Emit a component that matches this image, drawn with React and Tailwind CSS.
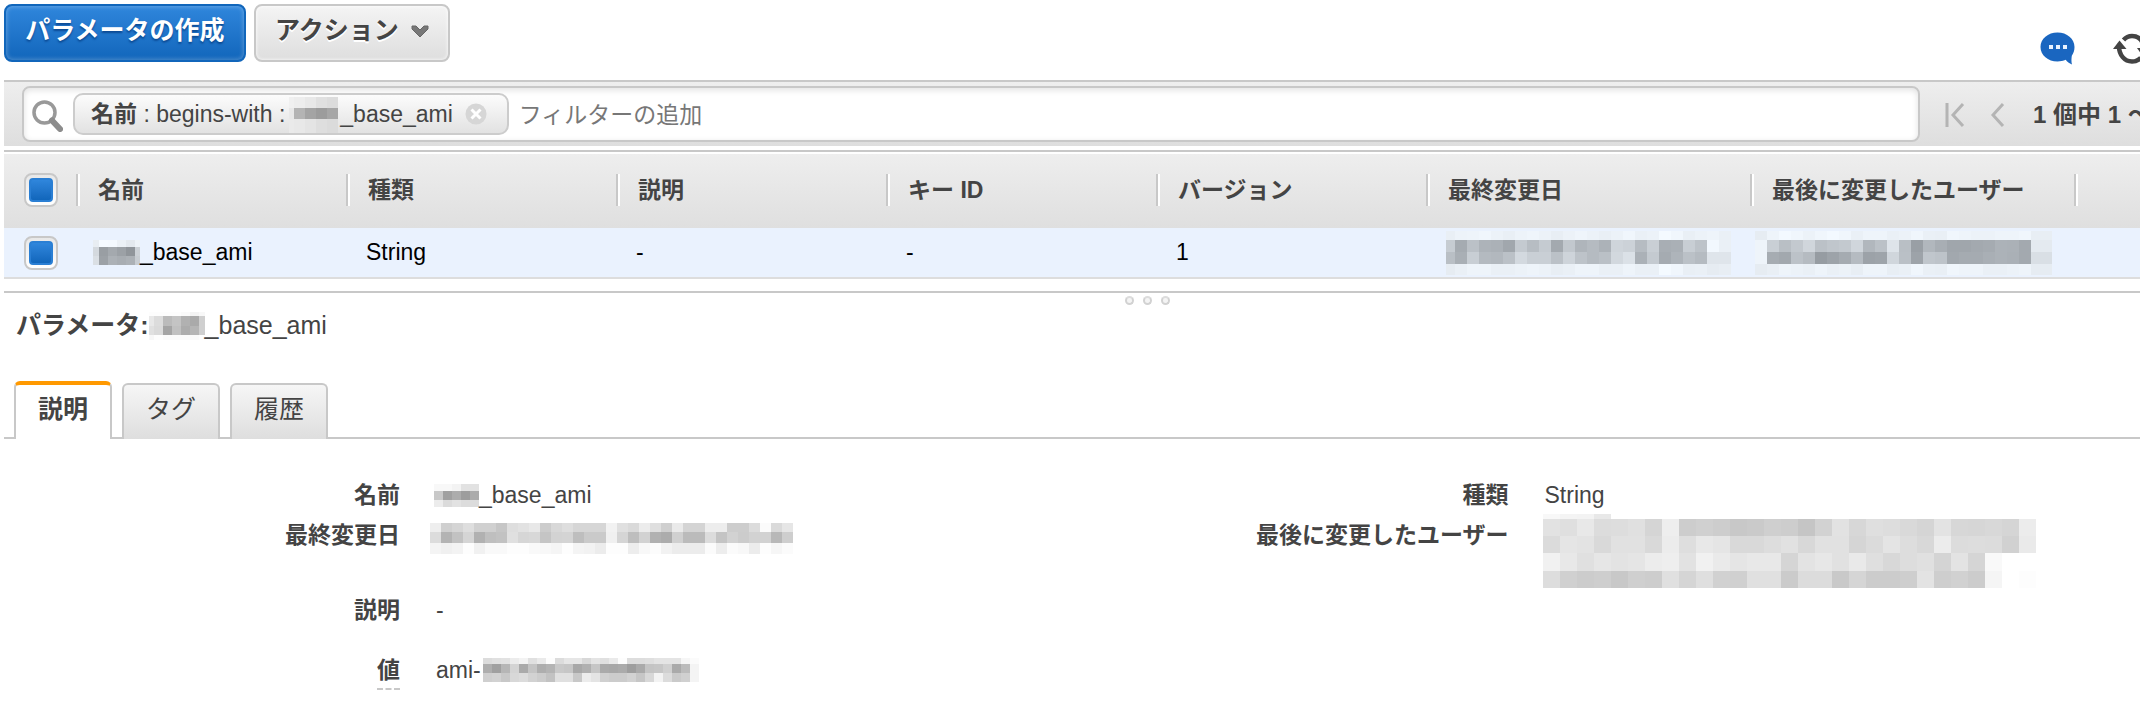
import React from "react";

// Pixelated block that hides private values. Each row is "height: gray gray ...", two hex digits per cell.
function Mosaic({ w, first = w, last = w, rows, tint = 0, className = "" }) {
  const parsed = rows.map(([h, cells]) => ({ h, cells: cells.split(" ") }));
  const count = parsed[0].cells.length;
  const width = first + last + (count - 2) * w;
  const height = parsed.reduce((sum, row) => sum + row.h, 0);
  let y = 0;
  return (
    <svg
      width={width}
      height={height}
      viewBox={`0 0 ${width} ${height}`}
      shapeRendering="crispEdges"
      aria-hidden="true"
      className={`block shrink-0 ${className}`}
    >
      {parsed.map(({ h, cells }, r) => {
        const top = y;
        y += h;
        return cells.map((cell, i) => {
          if (cell === "--") return null;
          const v = parseInt(cell, 16);
          const x = i === 0 ? 0 : first + (i - 1) * w;
          const cw = i === 0 ? first : i === count - 1 ? last : w;
          const g = Math.min(255, v + tint);
          const b = Math.min(255, v + tint * 2);
          return <rect key={`${r}-${i}`} x={x} y={top} width={cw} height={h} fill={`rgb(${v},${g},${b})`} />;
        });
      })}
    </svg>
  );
}

const rowName = [
  [7, "e8 f5 f4 ec e4 ee"],
  [9, "d4 99 a4 9c 90 cc"],
  [9, "da 9c ac a8 ac c8"],
];
const rowDate = [
  [9, "e9 ed ee f0 ec e9 ed ef ec e8 ec ef ec e9 ec f0 ea ec f4 f0 e9 ec ee ea"],
  [12, "c6 a5 bb ad ab a1 c4 b7 c5 a3 c2 af b5 ac cf cc b6 c9 a8 aa c8 bd f2 ea"],
  [12, "b9 a9 c8 b4 b2 bb d3 c9 c9 bb ce bd b5 ba d2 db ab c4 a5 ae bb b5 df df"],
  [11, "e6 ea ee ee ea ea ec ee ec e8 ea ee ee ea ea ee ea ea f4 f0 e9 ea e6 e8"],
];
const rowUser = [
  [9, "e6 ee f3 f0 ec f0 f3 f0 ea ee ee ea ec f0 ea e9 f0 ee ec ec ee ee f0 e8"],
  [12, "ee c9 b9 c3 d0 bb c0 c3 d0 b1 bb de b9 99 b1 a8 a0 a0 a3 a5 ac ab a3 e4"],
  [12, "ee a6 a2 bc b5 96 9d a5 b5 9c 9e d0 ba 9d c0 bd a2 a5 a5 a9 ac aa a3 d9"],
  [11, "e6 e9 ee ec ea ee ea ec e8 ee ee e8 ea f0 ea e9 f0 ee ee ea ea ec ee e6"],
];
const titleName = [
  [4, "fd fd fd fd fa f3 f8"],
  [10, "e8 dc bb c4 b1 aa cf"],
  [9, "e0 da a4 c0 ac b5 cf"],
  [5, "f7 fd fa fa fa fa fd"],
];
const chipName = [
  [11, "f0 ed e8 e0 dc"],
  [11, "e8 b4 a4 9c a6"],
  [14, "ea e8 e4 de db"],
];
const detailName = [
  [7, "f8 f8 f3 e2 e2"],
  [9, "c8 a0 ac 9d ab"],
  [7, "ec db e2 dc dc"],
];
const detailDate = [
  [9, "ee cf d5 de d0 d0 c6 de e2 e8 cc d8 de d6 d6 d6 f2 e0 da ec df cf ea d4 d4 ed ed cd cd dc fb da e6"],
  [11, "dc b3 c2 d5 b1 bf c2 e0 d6 d8 c5 d3 d4 be ca ca f0 d5 be d2 b1 ac d0 bb bb dc c4 d2 cc d2 d2 b8 ce"],
  [11, "f4 f0 f3 fd f1 f9 f9 fd fd f9 f8 f5 fd f4 f2 ec fd fd ed f8 fc f2 ec ec ec fb ed fb f8 ec fd f6 fb"],
];
const detailValue = [
  [6, "dc e0 e2 ec f3 e0 ea fd dc e6 e6 d8 e4 e0 ea fd dd dd df e4 e4 e4 f6 fb"],
  [9, "ae a0 b6 d4 aa c4 ae b4 c9 c6 a8 b0 c6 aa a8 ab 9e aa c4 c6 d0 aa bc f4"],
  [9, "cf d2 c8 d8 dc d2 cc c2 e0 e0 c8 ec e4 d0 cc cc d2 c6 d8 f3 dc ca d0 f4"],
];
const detailUser = [
  [5, "f8 f4 f3 e8 -- -- -- -- -- -- -- -- -- -- -- -- -- -- -- -- -- -- -- -- -- -- -- -- --"],
  [17, "e2 df e8 dc dd e0 d5 ee cd d0 cd c8 ca cf cd c5 d2 e2 d7 df dd d9 d5 e3 d7 d6 d8 d5 ec"],
  [17, "db e5 e3 d9 e1 e1 d9 ec de e8 e5 d9 d9 dd e1 d8 e1 e1 d5 db e4 dd d8 ec dc dd dc d1 ea"],
  [18, "f1 e8 e0 e6 e3 e5 ec ee e2 f1 ea e5 e8 e8 d5 e3 e7 e1 e9 df d8 dd e0 d4 e3 d5 f9 -- --"],
  [17, "dd d0 cc ce c8 cf cd e0 d5 df d1 d0 e0 e0 cb dc dc c9 d5 cc cc ce e3 ce d1 cc f5 -- fd"],
];

const columns = [
  { label: "名前", width: "w-[270px]" },
  { label: "種類", width: "w-[270px]" },
  { label: "説明", width: "w-[270px]" },
  { label: "キー ID", width: "w-[270px]" },
  { label: "バージョン", width: "w-[270px]" },
  { label: "最終変更日", width: "w-[324px]" },
  { label: "最後に変更したユーザー", width: "w-[324px]" },
  { label: "", width: "w-auto" },
];

function Check({ label }) {
  return (
    <input
      type="checkbox"
      defaultChecked
      aria-label={label}
      className="ml-5 grid size-[34px] appearance-none place-items-center rounded-lg border-2 border-[#c8c8c8] bg-linear-to-b from-[#e8e8e8] to-white checked:before:size-6 checked:before:rounded checked:before:border-2 checked:before:border-[#2a7fd4] checked:before:bg-linear-to-b checked:before:from-[#2f86dc] checked:before:to-[#1166bb] checked:before:content-['']"
    />
  );
}

function Toolbar() {
  return (
    <header className="flex h-20 items-start justify-between pt-1">
      <div className="flex gap-2">
        <button className="h-[58px] w-[242px] rounded-lg border-2 border-[#1166bb] bg-linear-to-b from-[#2f86dc] to-[#1166bb] pb-1 text-[25px] font-bold text-white shadow-[inset_0_0_4px_1px_rgba(255,255,255,0.25)] [text-shadow:0_2px_2px_#0b4a94]">
          パラメータの作成
        </button>
        <button className="flex h-[58px] w-[196px] items-center justify-center gap-3 rounded-lg border-2 border-[#c8c8c8] bg-linear-to-b from-[#f4f4f4] to-[#dedede] pb-1 text-[25px] font-bold shadow-[inset_0_0_3px_1px_rgba(255,255,255,0.6)] [text-shadow:0_2px_0_#fff]">
          アクション
          <svg width="18" height="12" viewBox="0 0 18 12" aria-hidden="true">
            <path d="M1 1h4l4 4 4-4h4v3l-8 8-8-8z" fill="#777" stroke="#666" strokeWidth="1" />
          </svg>
        </button>
      </div>
      <div className="flex w-[100px] shrink-0 items-center gap-[38px] overflow-hidden pt-7">
        <button aria-label="フィードバック" className="shrink-0">
          <svg width="35" height="33" viewBox="0 0 35 33">
            <path
              d="M17.500 0.500C8 0.500 0.500 6.800 0.500 15c0 8.200 7.500 14.500 17 14.500 3 0 5.800-.6 8.200-1.700 1.500 2 3.500 3.800 6.300 4.700-.8-2.600-.6-6-.2-8.700 1.700-2.500 2.700-5.500 2.700-8.800C34.500 6.800 27 0.500 17.500 0.500z"
              fill="#1a66c0"
            />
            <path d="M9 13h4v4H9zM16 13h4v4h-4zM23 13h4v4h-4z" fill="#e8f2ff" />
          </svg>
        </button>
        <button aria-label="更新" className="shrink-0">
          <svg width="36" height="32" viewBox="0 0 36 32" fill="none">
            <path d="M6 13c0 9 5.500 15.500 13 15.500 3.600 0 6.600-1.400 8.800-3.800" stroke="#444" strokeWidth="4.500" />
            <path d="M0 16 6.500 7.500 13.500 16z" fill="#444" />
            <path d="M10.500 7C12.600 4.600 15.500 3 19 3c7.500 0 12 5.800 12 14" stroke="#444" strokeWidth="4.500" />
            <path d="M24 15h12l-6 8.500z" fill="#444" />
          </svg>
        </button>
      </div>
    </header>
  );
}

function FilterBar() {
  return (
    <div className="flex h-[66px] items-center overflow-hidden border-t-2 border-[#c8c8c8] bg-linear-to-b from-[#eee] to-[#dedede] pl-[18px]">
      <div className="flex h-14 min-w-0 flex-1 items-center rounded-lg border-2 border-[#c8c8c8] bg-white pl-2 shadow-[inset_0_2px_6px_rgba(0,0,0,0.12)]">
        <svg width="31" height="32" viewBox="0 0 31 32" fill="none" aria-hidden="true" className="mr-2.5 mt-1 shrink-0">
          <circle cx="12.500" cy="12.500" r="10.500" stroke="#999" strokeWidth="3.500" />
          <path d="M20 20.500l8 8.500" stroke="#8c8c8c" strokeWidth="6" strokeLinecap="round" />
        </svg>
        <div className="flex h-[42px] shrink-0 items-end rounded-[10px] border-2 border-[#ccc] bg-linear-to-b from-[#fcfcfc] to-[#e2e2e2] pl-4 pr-5">
          <span className="self-center pr-1 whitespace-pre">
            <b>名前</b> : begins-with :
          </span>
          <Mosaic w={11} first={5} rows={chipName} />
          <span className="self-center pl-0.5">_base_ami</span>
          <button aria-label="フィルターを削除" className="ml-3 self-center">
            <svg width="22" height="22" viewBox="0 0 22 22">
              <circle cx="11" cy="11" r="10.500" fill="#d6d6d6" />
              <path d="M6.500 6.500l9 9M15.500 6.500l-9 9" stroke="#fff" strokeWidth="3" />
            </svg>
          </button>
        </div>
        <input
          type="text"
          aria-label="フィルター"
          placeholder="フィルターの追加"
          className="h-full min-w-0 flex-1 bg-transparent px-2.5 pt-0.5 outline-none placeholder:text-[#777]"
        />
      </div>
      <nav className="flex w-[220px] shrink-0 items-center overflow-hidden pl-[25px] pt-0.5">
        <button aria-label="最初のページ" className="shrink-0">
          <svg width="20" height="24" viewBox="0 0 20 24" fill="none" stroke="#b4b4b4" strokeWidth="3">
            <path d="M2 0v24M18 1 8 12l10 11" />
          </svg>
        </button>
        <button aria-label="前のページ" className="ml-6 shrink-0">
          <svg width="16" height="24" viewBox="0 0 16 24" fill="none" stroke="#b4b4b4" strokeWidth="3">
            <path d="M14 1 4 12l10 11" />
          </svg>
        </button>
        <span className="ml-7 text-2xl font-bold whitespace-nowrap">1 個中 1 〜</span>
      </nav>
    </div>
  );
}

function ParameterTable() {
  return (
    <div className="mt-1 border-t-2 border-[#c8c8c8] pt-0.5">
      <table className="w-full table-fixed border-collapse text-left">
        <thead>
          <tr className="h-[74px] bg-linear-to-b from-[#eee] to-[#dfdfdf]">
            <th className="w-[72px] p-0 pb-0.5">
              <Check label="すべて選択" />
            </th>
            {columns.map((c, i) => (
              <th key={i} className={`p-0 pb-0.5 ${c.width}`}>
                <div className="h-8 border-l-2 border-[#c8c8c8] pl-5 leading-8 whitespace-nowrap shadow-[inset_2px_0_0_#fff]">
                  {c.label}
                </div>
              </th>
            ))}
          </tr>
        </thead>
        <tbody>
          <tr className="h-[50px] border-b-2 border-[#ddd] bg-[#eaf2fe] text-black">
            <td className="p-0">
              <Check label="行を選択" />
            </td>
            <td className="p-0 pl-[17px]">
              <div className="flex items-center">
                <Mosaic w={9} first={6} last={5} tint={5} rows={rowName} />
                _base_ami
              </div>
            </td>
            <td className="p-0 pl-5">String</td>
            <td className="p-0 pl-5">-</td>
            <td className="p-0 pl-5">-</td>
            <td className="p-0 pl-5">1</td>
            <td className="p-0 pl-5">
              <Mosaic w={12} first={9} tint={6} rows={rowDate} />
            </td>
            <td className="p-0 pl-[5px]">
              <Mosaic w={12} last={21} tint={6} rows={rowUser} />
            </td>
            <td className="p-0"></td>
          </tr>
        </tbody>
      </table>
    </div>
  );
}

function Tabs() {
  return (
    <div role="tablist" className="mt-[38px] flex h-[58px] items-end gap-2.5 border-b-2 border-[#c8c8c8] pl-2.5">
      <button
        role="tab"
        aria-selected="true"
        className="-mb-0.5 h-[58px] w-[98px] rounded-t-md border-x-2 border-t-4 border-x-[#c8c8c8] border-t-[#ff9900] bg-white pb-1 text-[25px] font-bold"
      >
        説明
      </button>
      {["タグ", "履歴"].map((t) => (
        <button
          key={t}
          role="tab"
          aria-selected="false"
          className="-mb-0.5 h-14 w-[98px] rounded-t-md border-x-2 border-t-2 border-[#c8c8c8] bg-linear-to-b from-[#f6f6f6] to-[#dedede] pb-1 text-[25px]"
        >
          {t}
        </button>
      ))}
    </div>
  );
}

function Details() {
  return (
    <dl className="mt-9 grid grid-cols-[396px_minmax(0,20fr)_336px_minmax(0,17fr)] gap-x-9 leading-10 [&>dt]:text-right [&>dt]:font-bold [&>dt]:whitespace-nowrap">
      <dt>名前</dt>
      <dd className="-ml-0.5 flex items-center">
        <Mosaic w={9} rows={detailName} />
        _base_ami
      </dd>
      <dt>種類</dt>
      <dd>String</dd>

      <dt>最終変更日</dt>
      <dd className="-ml-1.5 pt-2">
        <Mosaic w={11} rows={detailDate} />
      </dd>
      <dt>最後に変更したユーザー</dt>
      <dd className="-ml-0.5 -mt-px">
        <Mosaic w={17} rows={detailUser} />
      </dd>

      <dt className="pt-0.5">説明</dt>
      <dd className="col-span-3 pt-0.5">-</dd>

      <dt className="pt-5">
        <span className="inline-block h-10 border-b-2 border-dashed border-[#c8c8c8]">値</span>
      </dt>
      <dd className="col-span-3 flex items-center gap-0.5 pt-5">
        ami-
        <Mosaic w={9} rows={detailValue} />
      </dd>
    </dl>
  );
}

export default function App() {
  return (
    <div className="overflow-x-hidden bg-white pl-1 font-['Liberation_Sans','Noto_Sans_CJK_JP',sans-serif] text-[23px] text-[#444]">
      <Toolbar />
      <FilterBar />
      <ParameterTable />
      <section className="mt-3 border-t-2 border-[#c8c8c8]">
        <div className="flex h-4 justify-center gap-[9px] pl-[150px] pt-[3px]">
          {[0, 1, 2].map((i) => (
            <span key={i} className="size-[9px] rounded-full border-2 border-[#d2d2d2] border-t-[#dcdcdc] bg-[#f4f4f4]" />
          ))}
        </div>
        <h2 className="flex h-[34px] items-center pl-3 text-[25px]">
          <b>パラメータ:</b>
          <Mosaic w={9} first={5} last={6} rows={titleName} />
          _base_ami
        </h2>
        <Tabs />
        <Details />
      </section>
    </div>
  );
}
